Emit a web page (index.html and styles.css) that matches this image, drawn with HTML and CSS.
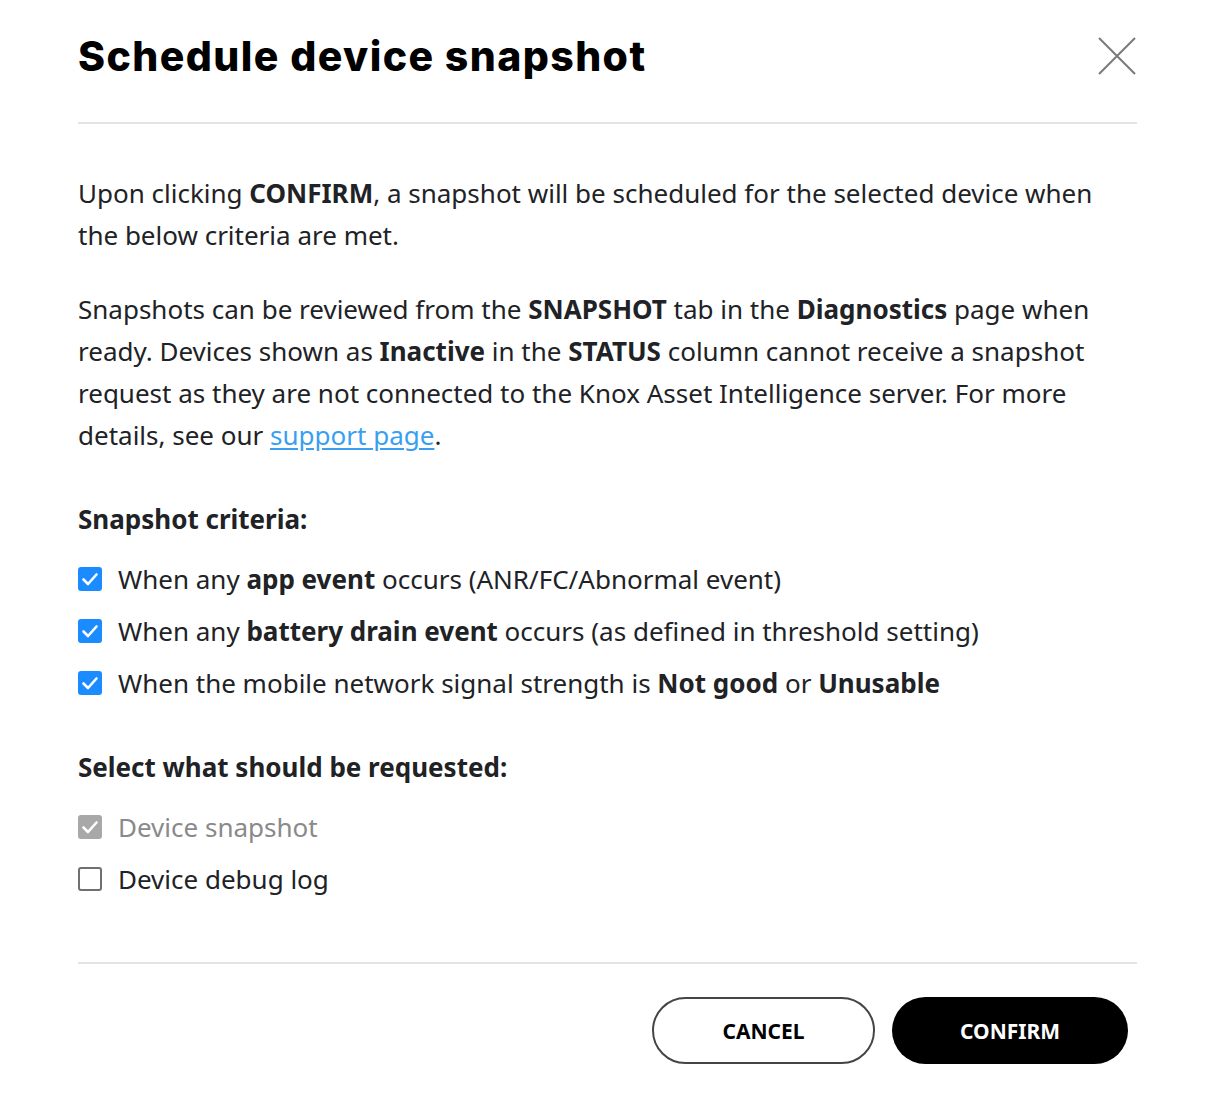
FILE: index.html
```html
<!DOCTYPE html>
<html lang="en">
<head>
<meta charset="utf-8">
<title>Schedule device snapshot</title>
<link rel="stylesheet" href="styles.css">
</head>
<body>
<div class="modal">
  <header class="modal-header">
    <h1 class="modal-title">Schedule device snapshot</h1>
    <button class="close-btn" aria-label="Close">
      <svg width="40" height="40" viewBox="0 0 40 40"><path d="M2 2 L38 38 M38 2 L2 38" stroke="#7a7a7a" stroke-width="2" fill="none"/></svg>
    </button>
  </header>
  <main class="modal-body">
    <p class="para">Upon clicking <b>CONFIRM</b>, a snapshot will be scheduled for the selected device when the below criteria are met.</p>
    <p class="para para-2">Snapshots can be reviewed from the <b>SNAPSHOT</b> tab in the <b>Diagnostics</b> page when ready. Devices shown as <b>Inactive</b> in the <b>STATUS</b> column cannot receive a snapshot request as they are not connected to the Knox Asset Intelligence server. For more details, see our <a href="#" class="link">support page</a>.</p>

    <h2 class="section-title">Snapshot criteria:</h2>
    <ul class="check-list">
      <li class="check-row"><span class="box checked"><svg viewBox="0 0 24 24"><path d="M5.5 12.5 L10 17 L18.5 7.5" stroke="#fff" stroke-width="2.6" fill="none" stroke-linecap="round" stroke-linejoin="round"/></svg></span><span>When any <b>app event</b> occurs (ANR/FC/Abnormal event)</span></li>
      <li class="check-row"><span class="box checked"><svg viewBox="0 0 24 24"><path d="M5.5 12.5 L10 17 L18.5 7.5" stroke="#fff" stroke-width="2.6" fill="none" stroke-linecap="round" stroke-linejoin="round"/></svg></span><span>When any <b>battery drain event</b> occurs (as defined in threshold setting)</span></li>
      <li class="check-row"><span class="box checked"><svg viewBox="0 0 24 24"><path d="M5.5 12.5 L10 17 L18.5 7.5" stroke="#fff" stroke-width="2.6" fill="none" stroke-linecap="round" stroke-linejoin="round"/></svg></span><span>When the mobile network signal strength is <b>Not good</b> or <b>Unusable</b></span></li>
    </ul>

    <h2 class="section-title">Select what should be requested:</h2>
    <ul class="check-list">
      <li class="check-row disabled"><span class="box disabled-box"><svg viewBox="0 0 24 24"><path d="M5.5 12.5 L10 17 L18.5 7.5" stroke="#fff" stroke-width="2.6" fill="none" stroke-linecap="round" stroke-linejoin="round"/></svg></span><span>Device snapshot</span></li>
      <li class="check-row"><span class="box empty"></span><span>Device debug log</span></li>
    </ul>
  </main>
  <footer class="modal-footer">
    <button class="btn btn-outline">CANCEL</button>
    <button class="btn btn-solid">CONFIRM</button>
  </footer>
</div>
</body>
</html>
```

FILE: styles.css
```css
* { box-sizing: border-box; }
html, body { margin: 0; padding: 0; background: #fff; }
body {
  font-family: "Noto Sans", "Open Sans", sans-serif;
  color: #202226;
}
.modal {
  width: 1214px;
  padding: 0 77px 0 78px;
}
.modal-header {
  display: flex;
  justify-content: space-between;
  align-items: center;
  height: 124px;
  border-bottom: 2px solid #e1e3e6;
  padding-bottom: 10px;
}
.modal-title {
  margin: 0;
  font-family: "Inter", sans-serif;
  font-weight: 800;
  font-size: 41px;
  letter-spacing: 1.4px;
  color: #000;
}
.close-btn {
  background: none;
  border: 0;
  padding: 0;
  width: 40px;
  height: 40px;
  cursor: pointer;
}
.close-btn svg { display: block; }
.modal-body {
  padding-top: 48px;
  padding-bottom: 62px;
  border-bottom: 2px solid #e1e3e6;
}
.para {
  margin: 0;
  font-size: 26px;
  line-height: 42px;
}
.para b { font-weight: 700; }
.para-2 { margin-top: 32px; }
.link { color: #3a9ff0; text-decoration: underline; text-underline-offset: 3px; }
.section-title {
  margin: 42px 0 0;
  font-size: 26px;
  line-height: 42px;
  font-weight: 700;
}
.check-list {
  list-style: none;
  margin: 18px 0 0;
  padding: 0;
  display: flex;
  flex-direction: column;
  gap: 10px;
}
.check-row {
  display: flex;
  align-items: center;
  gap: 16px;
  font-size: 26px;
  line-height: 42px;
}
.check-row b { font-weight: 700; }
.check-row.disabled { color: #8a8a8a; }
.box {
  width: 24px;
  height: 24px;
  border-radius: 3px;
  flex: none;
  display: block;
}
.box svg { display: block; width: 24px; height: 24px; }
.box.checked { background: #1a8cff; }
.box.disabled-box { background: #a8a8a8; }
.box.empty { border: 2px solid #707070; background: #fff; }
.modal-footer {
  display: flex;
  justify-content: flex-end;
  gap: 17px;
  padding: 33px 9px 40px 0;
}
.btn {
  height: 67px;
  border-radius: 34px;
  font-family: "Noto Sans", sans-serif;
  font-weight: 700;
  font-size: 21px;
  cursor: pointer;
}
.btn-outline {
  width: 223px;
  background: #fff;
  color: #000;
  border: 2px solid #444;
}
.btn-solid {
  width: 236px;
  background: #000;
  color: #fff;
  border: 0;
}
```
